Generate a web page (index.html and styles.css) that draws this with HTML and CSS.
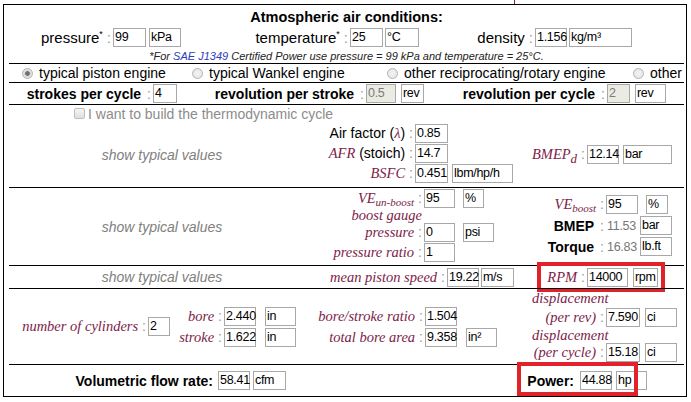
FILE: index.html
```html
<!DOCTYPE html>
<html lang="en">
<head>
<meta charset="utf-8">
<title>Engine calculator</title>
<link rel="stylesheet" href="styles.css">
</head>
<body>
<div class="frame">
  <span class="tick"></span>

  <section class="sec s-air">
    <div class="title">Atmospheric air conditions:</div>
    <div class="air-row">
      <div class="fld g-press">
        <span class="lb lw-press">pressure<sup>*</sup><span class="c">:</span></span>
        <span class="bx w33">99</span>
        <span class="bx w32 ml3">kPa</span>
      </div>
      <div class="fld g-temp">
        <span class="lb lw-temp">temperature<sup>*</sup><span class="c">:</span></span>
        <span class="bx w33">25</span>
        <span class="bx w34 ml2">°C</span>
      </div>
      <div class="fld g-dens">
        <span class="lb lw-dens">density<span class="c">:</span></span>
        <span class="bx w32">1.156</span>
        <span class="bx w63 ml2">kg/m³</span>
      </div>
    </div>
    <div class="note">*For <span class="link">SAE J1349</span> Certified Power use pressure = 99 kPa and temperature = 25°C.</div>
  </section>

  <section class="sec s-radio">
    <span class="opt o1"><span class="radio on"></span>typical piston engine</span>
    <span class="opt o2"><span class="radio"></span>typical Wankel engine</span>
    <span class="opt o3"><span class="radio"></span>other reciprocating/rotary engine</span>
    <span class="opt"><span class="radio"></span>other</span>
  </section>

  <section class="sec s-strokes">
    <div class="fld sg1"><span class="lb b lw-s1">strokes per cycle<span class="c">:</span></span><span class="bx w24">4</span></div>
    <div class="fld sg2"><span class="lb b lw-s2">revolution per stroke<span class="c">:</span></span><span class="bx dis w30">0.5</span><span class="bx w23 ml5">rev</span></div>
    <div class="fld sg3"><span class="lb b lw-s3">revolution per cycle<span class="c">:</span></span><span class="bx dis w23">2</span><span class="bx w31 ml5">rev</span></div>
  </section>

  <section class="sec s-a">
    <div class="chk-row"><span class="chk"></span>I want to build the thermodynamic cycle</div>
    <div class="grid g-a">
      <div class="typ">show typical values</div>
      <div class="col pt1">
        <div class="fld r20"><span class="lb lw100">Air factor (<span class="s">λ</span>)<span class="c">:</span></span><span class="bx w33">0.85</span></div>
        <div class="fld r20"><span class="lb lw100"><span class="s">AFR</span> (stoich)<span class="c">:</span></span><span class="bx w33">14.7</span></div>
        <div class="fld r20"><span class="lb lw100"><span class="s">BSFC</span><span class="c">:</span></span><span class="bx w33">0.451</span><span class="bx w61 ml4">lbm/hp/h</span></div>
      </div>
      <div class="col vc">
        <div class="fld"><span class="lb lw67"><span class="s">BMEP<sub class="sd">d</sub></span><span class="c">:</span></span><span class="bx w32">12.14</span><span class="bx w49 ml4">bar</span></div>
      </div>
    </div>
  </section>

  <section class="sec s-b">
    <div class="grid g-b">
      <div class="typ">show typical values</div>
      <div class="col pt1">
        <div class="fld r19"><span class="lb lw109"><span class="s">VE<sub class="sv">un-boost</sub></span><span class="c">:</span></span><span class="bx w31">95</span><span class="bx w21 ml8">%</span></div>
        <div class="line14 lw107 s">boost gauge</div>
        <div class="fld r20"><span class="lb lw109"><span class="s">pressure</span><span class="c">:</span></span><span class="bx w31">0</span><span class="bx w31 ml8">psi</span></div>
        <div class="fld r21"><span class="lb lw109"><span class="s">pressure ratio</span><span class="c">:</span></span><span class="bx w31">1</span></div>
      </div>
      <div class="col pt6">
        <div class="fld r21"><span class="lb lw86"><span class="s">VE<sub class="sv">boost</sub></span><span class="c">:</span></span><span class="bx w32">95</span><span class="bx w22 ml8">%</span></div>
        <div class="fld r21"><span class="lb lw86 b">BMEP<span class="c">:</span></span><span class="val">11.53</span><span class="bx w32">bar</span></div>
        <div class="fld r21"><span class="lb lw86 b">Torque<span class="c">:</span></span><span class="val">16.83</span><span class="bx w32">lb.ft</span></div>
      </div>
    </div>
  </section>

  <section class="sec s-c">
    <div class="grid g-c">
      <div class="typ">show typical values</div>
      <div class="col vc">
        <div class="fld"><span class="lb lw132"><span class="s">mean piston speed</span><span class="c">:</span></span><span class="bx w32">19.22</span><span class="bx w33 ml2">m/s</span></div>
      </div>
      <div class="col vc">
        <div class="fld"><span class="lb lw67"><span class="s">RPM</span><span class="c">:</span></span><span class="bx w41">14000</span><span class="bx w25 ml5">rpm</span></div>
      </div>
    </div>
    <span class="hl hl-rpm"></span>
  </section>

  <section class="sec s-d">
    <div class="col vc cw-cyl">
      <div class="fld"><span class="lb lw139"><span class="s">number of cylinders</span><span class="c">:</span></span><span class="bx w22">2</span></div>
    </div>
    <div class="col pt17 cw-bore">
      <div class="fld r21"><span class="lb lw54"><span class="s">bore</span><span class="c">:</span></span><span class="bx w32">2.440</span><span class="bx w31 ml9">in</span></div>
      <div class="fld r21"><span class="lb lw54"><span class="s">stroke</span><span class="c">:</span></span><span class="bx w32">1.622</span><span class="bx w31 ml9">in</span></div>
    </div>
    <div class="col pt17 cw-ratio">
      <div class="fld r21"><span class="lb lw125"><span class="s">bore/stroke ratio</span><span class="c">:</span></span><span class="bx w32">1.504</span></div>
      <div class="fld r21"><span class="lb lw125"><span class="s">total bore area</span><span class="c">:</span></span><span class="bx w32">9.358</span><span class="bx w31 ml9">in²</span></div>
    </div>
    <div class="col pt1">
      <div class="line17 s">displacement</div>
      <div class="fld r20"><span class="lb lw86"><span class="s">(per rev)</span><span class="c">:</span></span><span class="bx w34">7.590</span><span class="bx w32 ml5">ci</span></div>
      <div class="line16 s">displacement</div>
      <div class="fld r19"><span class="lb lw86"><span class="s">(per cycle)</span><span class="c">:</span></span><span class="bx w34">15.18</span><span class="bx w32 ml5">ci</span></div>
    </div>
  </section>

  <section class="sec s-e">
    <div class="fld"><span class="lb b lw209 pr5">Volumetric flow rate:</span><span class="bx w32">58.41</span><span class="bx w33 ml3">cfm</span></div>
    <div class="fld g-pow"><span class="lb b lw60 pr6">Power:</span><span class="bx w32">44.88</span><span class="bx w31 ml4">hp</span></div>
    <span class="hl hl-pow"></span>
  </section>
</div>
</body>
</html>
```

FILE: styles.css
```css
* { box-sizing: border-box; }

body {
  margin: 0;
  background: #fff;
  color: #000;
  font-family: "Liberation Sans", Arial, sans-serif;
  font-size: 14px;
}

.frame {
  position: relative;
  width: 684px;
  height: 393px;
  margin: 4px 0 0 3px;
  border: 1px solid #000;
  padding: 0 2px 0 5px;
}

.tick {
  position: absolute;
  left: 510px;
  top: -5px;
  width: 1px;
  height: 4px;
  background: #7d2248;
}

.sec { position: relative; border-top: 1px solid #000; }
.s-air { border-top: 0; height: 58px; }
.s-radio { height: 19px; display: flex; align-items: center; }
.s-strokes { height: 22px; display: flex; align-items: center; }
.s-a { height: 83px; }
.s-b { height: 78px; }
.s-c { height: 23px; }
.s-d { height: 76px; display: flex; }
.s-e { height: 32px; display: flex; align-items: center; }

/* generic field */
.fld { display: flex; align-items: center; white-space: nowrap; }
.lb { display: inline-block; text-align: right; flex: none; white-space: nowrap; }
.b { font-weight: bold; }
.c { color: #9a9a9a; font-weight: normal; font-style: normal; font-family: "Liberation Sans", Arial, sans-serif; font-size: 14px; margin: 0 2px 0 4px; }
.b .c { margin-left: 6px; }
.s { font-family: "Liberation Serif", "Times New Roman", serif; font-style: italic; color: #7d2248; font-size: 14.5px; }
sup { font-size: 9px; vertical-align: 6px; line-height: 0; }

.bx {
  display: inline-block;
  flex: none;
  height: 19px;
  border: 1px solid #a8a8a8;
  background: #fff;
  padding: 0 0 0 1px;
  font-size: 12.5px;
  letter-spacing: -0.3px;
  line-height: 17px;
  color: #000;
}
.bx.dis { background: #ebebe4; color: #7a7a7a; }
.val { display: inline-block; width: 34px; font-size: 12.5px; letter-spacing: -0.3px; color: #777; padding-left: 1px; }

.w21 { width: 21px; } .w22 { width: 22px; } .w23 { width: 23px; } .w24 { width: 24px; }
.w25 { width: 25px; } .w30 { width: 30px; } .w31 { width: 31px; } .w32 { width: 32px; }
.w33 { width: 33px; } .w34 { width: 34px; } .w41 { width: 41px; } .w49 { width: 49px; }
.w61 { width: 61px; } .w63 { width: 63px; }
.ml2 { margin-left: 2px; } .ml3 { margin-left: 3px; } .ml4 { margin-left: 4px; }
.ml5 { margin-left: 5px; } .ml8 { margin-left: 8px; } .ml9 { margin-left: 9px; }
.pr5 { padding-right: 5px; } .pr6 { padding-right: 6px; }

/* air section */
.title {
  height: 22px;
  padding-top: 2px;
  line-height: 20px;
  text-align: center;
  font-weight: bold;
  font-size: 14.5px;
}
.air-row { height: 20px; display: flex; align-items: center; font-size: 15px; }
.air-row .c { font-size: 15px; }
.g-press { margin-left: 31px; }
.g-temp { margin-left: 69px; }
.g-dens { margin-left: 51px; }
.lw-press { width: 73px; }
.lw-temp { width: 100px; }
.lw-dens { width: 65px; }
.note {
  margin-top: 2px;
  height: 14px;
  line-height: 14px;
  text-align: center;
  font-size: 11px;
  font-style: italic;
  color: #222;
}
.link { color: #2a3cc0; }

/* radio row */
.opt { display: flex; align-items: center; white-space: nowrap; }
.o1 { margin-left: 13px; width: 170px; }
.o2 { width: 195px; }
.o3 { width: 246px; }
.radio {
  flex: none;
  width: 11px;
  height: 11px;
  margin-right: 6px;
  border-radius: 50%;
  border: 1px solid #b4b4b4;
  background: radial-gradient(circle, #f4f4f4 0, #e2e2e2 100%);
}
.radio.on { background: radial-gradient(circle, #707070 0 2px, #d8d8d8 2.6px, #f0f0f0 100%); }

/* strokes row */
.sg1 { margin-left: 11px; }
.sg2 { margin-left: 23px; }
.sg3 { margin-left: 26px; }
.lw-s1 { width: 133px; }
.lw-s2 { width: 166px; }
.lw-s3 { width: 157px; }

/* checkbox row */
.chk-row {
  height: 17px;
  display: flex;
  align-items: center;
  padding-left: 65px;
  color: #8c8c8c;
}
.chk {
  width: 11px;
  height: 11px;
  margin-right: 3px;
  border: 1px solid #bdbdbd;
  border-radius: 2px;
  background: linear-gradient(#f6f6f6, #dedede);
}

/* three-column grids */
.grid { display: grid; grid-template-columns: 306px 205px 1fr; }
.g-a { height: 65px; }
.g-b { height: 77px; }
.g-c { height: 22px; }
.typ {
  display: flex;
  align-items: center;
  justify-content: center;
  font-style: italic;
  color: #808080;
}
.col { display: flex; flex-direction: column; }
.vc { justify-content: center; }
.pt1 { padding-top: 1px; }
.pt6 { padding-top: 6px; }
.pt17 { padding-top: 17px; }
.r19 { height: 19px; }
.r20 { height: 20px; }
.r21 { height: 21px; }
.line14 { height: 14px; line-height: 14px; text-align: right; }
.line16 { height: 16px; line-height: 16px; padding-left: 12px; }
.line17 { height: 17px; line-height: 17px; padding-left: 12px; }

.lw54 { width: 54px; } .lw60 { width: 60px; } .lw67 { width: 67px; } .lw86 { width: 86px; }
.lw100 { width: 100px; } .lw107 { width: 107px; } .lw109 { width: 109px; }
.lw125 { width: 125px; } .lw132 { width: 132px; } .lw139 { width: 139px; } .lw209 { width: 209px; }

.sv { font-size: 11px; vertical-align: -3px; line-height: 0; }
.sd { font-size: 13px; vertical-align: -4px; line-height: 0; }

/* cylinder section columns */
.cw-cyl { width: 161px; }
.cw-bore { width: 130px; }
.cw-ratio { width: 220px; }

.g-pow { margin-left: 234px; }

/* red highlight frames */
.hl { position: absolute; border: 4px solid #e1222b; pointer-events: none; }
.hl-rpm { left: 528px; top: -4px; width: 128px; height: 30px; }
.hl-pow { left: 508px; top: -3px; width: 121px; height: 34px; }
```
